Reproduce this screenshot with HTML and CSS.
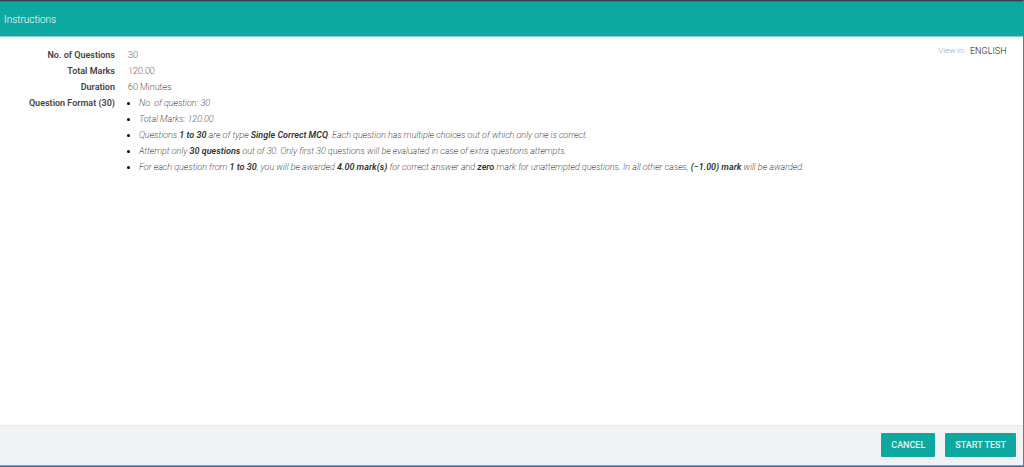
FILE: index.html
```html
<!DOCTYPE html>
<html lang="en">
<head>
<meta charset="utf-8">
<title>Instructions</title>
<link rel="stylesheet" href="styles.css">
</head>
<body>
<div class="window">
  <header class="header"><h1 class="title">Instructions</h1></header>
  <main class="content">
    <dl class="details">
      <dt>No. of Questions</dt><dd>30</dd>
      <dt>Total Marks</dt><dd>120.00</dd>
      <dt>Duration</dt><dd>60 Minutes</dd>
      <dt>Question Format (30)</dt>
      <dd>
        <ul class="rules">
          <li>No. of question: 30</li>
          <li>Total Marks: 120.00</li>
          <li>Questions <b>1 to 30</b> are of type <b>Single Correct MCQ</b>. Each question has multiple choices out of which only one is correct.</li>
          <li>Attempt only <b>30 questions</b> out of 30. Only first 30 questions will be evaluated in case of extra questions attempts.</li>
          <li>For each question from <b>1 to 30</b>, you will be awarded <b>4.00 mark(s)</b> for correct answer and <b>zero</b> mark for unattempted questions. In all other cases, <b>(−1.00) mark</b> will be awarded.</li>
        </ul>
      </dd>
    </dl>
    <div class="language">
      <label class="language-label" for="language">View in:</label>
      <select class="language-select" id="language"><option>ENGLISH</option></select>
    </div>
  </main>
  <footer class="footer">
    <button class="button" type="button">CANCEL</button>
    <button class="button" type="button">START TEST</button>
  </footer>
</div>
</body>
</html>
```
FILE: styles.css
```css
* { box-sizing: border-box; }

body {
  margin: 0;
  font-family: Roboto, "Liberation Sans", sans-serif;
  font-size: 9px;
  line-height: 16px;
  color: #444;
}

.window {
  display: flex;
  flex-direction: column;
  min-height: 100vh;
  border-top: 1px solid #3d4048;
  border-right: 1px solid #4a7fcb;
  border-bottom: 1px solid #3d64a5;
}

.header {
  padding: 10px 4px 8px;
  border-top: 1px solid #346fa8;
  border-bottom: 1px solid #8bd3cd;
  background: #0da8a0;
}

.title {
  margin: 0;
  font-size: 10px;
  font-weight: 300;
  color: #fff;
}

.content {
  display: flex;
  flex: 1;
  justify-content: space-between;
  align-items: flex-start;
  padding: 6px 16px 6px 0;
}

.details {
  display: grid;
  grid-template-columns: 115px 1fr;
  column-gap: 13px;
  margin: 0;
  padding-top: 4px;
}

.details dt {
  font-weight: 600;
  text-align: right;
}

.details dd {
  margin: 0;
  font-weight: 200;
  color: #000;
}

.rules {
  margin: 0;
  padding-left: 11px;
  font-style: italic;
}

.rules b { font-weight: 600; color: #333; }

.language {
  display: flex;
  gap: 5px;
  align-items: center;
}

.language-label { font-size: 8px; font-weight: 300; color: #8fa6b4; }

.language-select {
  appearance: none;
  padding: 0;
  border: 0;
  background: none;
  font: inherit;
  font-weight: 300;
  color: #111;
}

.footer {
  display: flex;
  justify-content: flex-end;
  gap: 10px;
  padding: 7px 7px 8px;
  border-top: 1px solid #e6e8e9;
  border-bottom: 1px solid #7fa3d6;
  background: #f1f3f4;
}

.button {
  padding: 4px 10px;
  border: 0;
  border-radius: 1px;
  background: #0da8a0;
  font: inherit;
  font-weight: 500;
  color: #e6f7f6;
}
```
